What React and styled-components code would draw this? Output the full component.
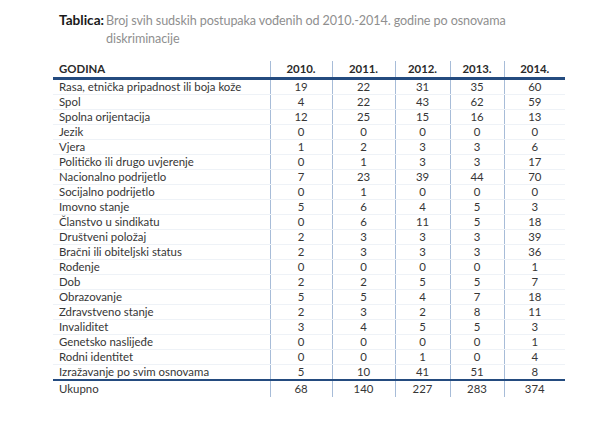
import React from "react";
import styled, { createGlobalStyle } from "styled-components";

const GlobalStyle = createGlobalStyle`
    html, body {
        margin: 0;
        padding: 0;
        background: #ffffff;
        overflow: hidden;
    }
    body {
        font-family: Lato, "Open Sans", sans-serif;
    }
`;

const Page = styled.div`
    width: 600px;
    height: 432px;
    padding: 11px 35px 0 53px;
    box-sizing: border-box;
    overflow: hidden;
`;

const Caption = styled.div`
    display: flex;
    align-items: baseline;
    padding-left: 6px;
    line-height: 18px;
    color: #8f8f8f;
    margin-bottom: 13px;
`;

const CaptionLabel = styled.b`
    color: #1a1a1a;
    font-size: 13.6px;
    font-weight: 700;
    width: 47px;
    flex-shrink: 0;
`;

const CaptionText = styled.span`
    width: 440px;
    font-size: 12.6px;
    letter-spacing: -0.1px;
`;

const Table = styled.table`
    width: 512px;
    border-collapse: collapse;
    font-size: 11.4px;
    color: #363636;
    table-layout: fixed;
`;

const Th = styled.th`
    height: 16px;
    padding: 0 6px;
    font-weight: 700;
    color: #2a2a2a;
    text-align: ${(props) => (props.$left ? "left" : "center")};
    border-bottom: 3px solid #244b7f;
    border-left: ${(props) => (props.$left ? "none" : "1px solid #a7bcd8")};
    line-height: 16px;
`;

const Td = styled.td`
    height: 14px;
    padding: 0 6px;
    line-height: 14px;
    text-align: ${(props) => (props.$left ? "left" : "center")};
    border-left: ${(props) => (props.$left ? "none" : "1px solid #a7bcd8")};
    border-bottom: 1px solid #eef2f7;
    white-space: nowrap;
`;

const TotalTd = styled(Td)`
    border-bottom: none;
    height: 16px;
    line-height: 16px;
`;

const TotalRow = styled.tr`
    border-top: 2px solid #244b7f;
`;

const Footer = styled.div`
    margin-top: 36px;
    padding-left: 28px;
    font-size: 15px;
    font-weight: 700;
    color: #4a6fa5;
`;

const years = ["2010.", "2011.", "2012.", "2013.", "2014."];
const widths = [217, 62, 63, 55, 54, 61];

const rows = [
    ["Rasa, etnička pripadnost ili boja kože", 19, 22, 31, 35, 60],
    ["Spol", 4, 22, 43, 62, 59],
    ["Spolna orijentacija", 12, 25, 15, 16, 13],
    ["Jezik", 0, 0, 0, 0, 0],
    ["Vjera", 1, 2, 3, 3, 6],
    ["Političko ili drugo uvjerenje", 0, 1, 3, 3, 17],
    ["Nacionalno podrijetlo", 7, 23, 39, 44, 70],
    ["Socijalno podrijetlo", 0, 1, 0, 0, 0],
    ["Imovno stanje", 5, 6, 4, 5, 3],
    ["Članstvo u sindikatu", 0, 6, 11, 5, 18],
    ["Društveni položaj", 2, 3, 3, 3, 39],
    ["Bračni ili obiteljski status", 2, 3, 3, 3, 36],
    ["Rođenje", 0, 0, 0, 0, 1],
    ["Dob", 2, 2, 5, 5, 7],
    ["Obrazovanje", 5, 5, 4, 7, 18],
    ["Zdravstveno stanje", 2, 3, 2, 8, 11],
    ["Invaliditet", 3, 4, 5, 5, 3],
    ["Genetsko naslijeđe", 0, 0, 0, 0, 1],
    ["Rodni identitet", 0, 0, 1, 0, 4],
    ["Izražavanje po svim osnovama", 5, 10, 41, 51, 8],
];

const totals = ["Ukupno", 68, 140, 227, 283, 374];

function App() {
    return (
        <Page>
            <GlobalStyle />
            <Caption>
                <CaptionLabel>Tablica:</CaptionLabel>
                <CaptionText>
                    Broj svih sudskih postupaka vođenih od 2010.-2014. godine po osnovama diskriminacije
                </CaptionText>
            </Caption>
            <Table>
                <colgroup>
                    {widths.map((w, i) => (
                        <col key={i} style={{ width: w }} />
                    ))}
                </colgroup>
                <thead>
                    <tr>
                        <Th $left>GODINA</Th>
                        {years.map((y) => (
                            <Th key={y}>{y}</Th>
                        ))}
                    </tr>
                </thead>
                <tbody>
                    {rows.map((r) => (
                        <tr key={r[0]}>
                            {r.map((c, i) => (
                                <Td key={i} $left={i === 0}>
                                    {c}
                                </Td>
                            ))}
                        </tr>
                    ))}
                    <TotalRow>
                        {totals.map((c, i) => (
                            <TotalTd key={i} $left={i === 0}>
                                {c}
                            </TotalTd>
                        ))}
                    </TotalRow>
                </tbody>
            </Table>
            <Footer>Izvor podataka</Footer>
        </Page>
    );
}

export default App;
